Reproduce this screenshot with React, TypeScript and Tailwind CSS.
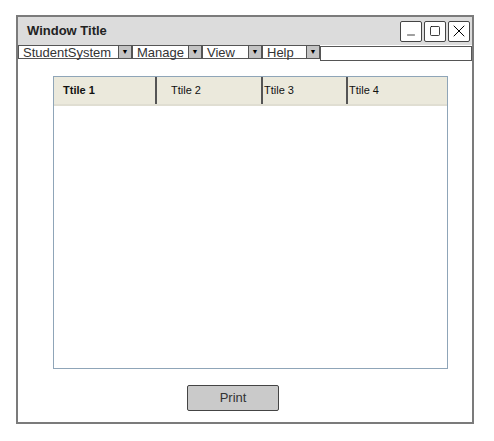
import { Minus, Square, X } from "lucide-react";

const menus = [
  { label: "StudentSystem", w: "w-[101px]" },
  { label: "Manage", w: "w-[57px]" },
  { label: "View", w: "w-[47px]" },
  { label: "Help", w: "w-[45px]" },
];

const cols = [
  { label: "Ttile 1", w: "w-[103px]", cls: "pl-[9px] font-bold" },
  { label: "Ttile 2", w: "w-[106px]", cls: "pl-[14px]" },
  { label: "Ttile 3", w: "w-[85px]", cls: "pl-[1px]" },
  { label: "Ttile 4", w: "flex-1", cls: "pl-[1px]" },
];

function MenuItem({ label, w }: { label: string; w: string }) {
  return (
    <div className="flex h-full">
      <div
        className={`${w} h-full bg-white border border-[#555] pl-[4px] text-[13px] leading-[13px] text-[#333]`}
      >
        {label}
      </div>
      <div className="w-[13px] h-full bg-[#c4c4c4] border border-[#555] border-l-0 flex items-center justify-center text-[7px] text-black">
        ▼
      </div>
    </div>
  );
}

function WinButton({ children }: { children: React.ReactNode }) {
  return (
    <div className="w-[22px] h-[21px] border border-[#444] rounded-[2px] bg-white flex items-center justify-center">
      {children}
    </div>
  );
}

export default function App() {
  return (
    <div className="w-[494px] h-[441px] bg-white pt-[15px] pl-[16px] font-['Liberation_Sans',sans-serif]">
      <div className="w-[458px] h-[409px] border-2 border-[#7b7b7b] flex flex-col">
        {/* title bar */}
        <div className="h-[28px] bg-[#dcdcdc] flex items-center pl-[9px] pr-[2px]">
          <span className="text-[13px] font-bold text-[#222] flex-1">Window Title</span>
          <div className="flex gap-[2px]">
            <WinButton>
              <Minus size={12} strokeWidth={1.5} className="translate-y-[4px]" />
            </WinButton>
            <WinButton>
              <Square size={12} strokeWidth={1.5} />
            </WinButton>
            <WinButton>
              <X size={20} strokeWidth={1.2} />
            </WinButton>
          </div>
        </div>

        {/* menu bar */}
        <div className="h-[14px] flex items-start">
          {menus.map((m) => (
            <MenuItem key={m.label} label={m.label} w={m.w} />
          ))}
          <div className="flex-1 h-[15px] mt-[1px] border border-[#555] bg-white" />
        </div>

        {/* table */}
        <div className="ml-[35px] mt-[17px] w-[395px] h-[293px] border border-[#8fa5b8] flex flex-col">
          <div className="h-[29px] bg-[#ebe9dc] flex border-b-2 border-[#e0ded2]">
            {cols.map((c, i) => (
              <div
                key={c.label}
                className={`${c.w} ${c.cls} h-full flex items-center text-[11px] text-[#111] ${
                  i < 3 ? "border-r-2 border-[#555]" : ""
                }`}
              >
                {c.label}
              </div>
            ))}
          </div>
          <div className="flex-1 bg-white" />
        </div>

        {/* print */}
        <div className="ml-[169px] mt-[16px] w-[92px] h-[26px] bg-[#cacaca] border border-[#444] rounded-[2px] flex items-center justify-center text-[13px] text-[#333]">
          Print
        </div>
      </div>
    </div>
  );
}
